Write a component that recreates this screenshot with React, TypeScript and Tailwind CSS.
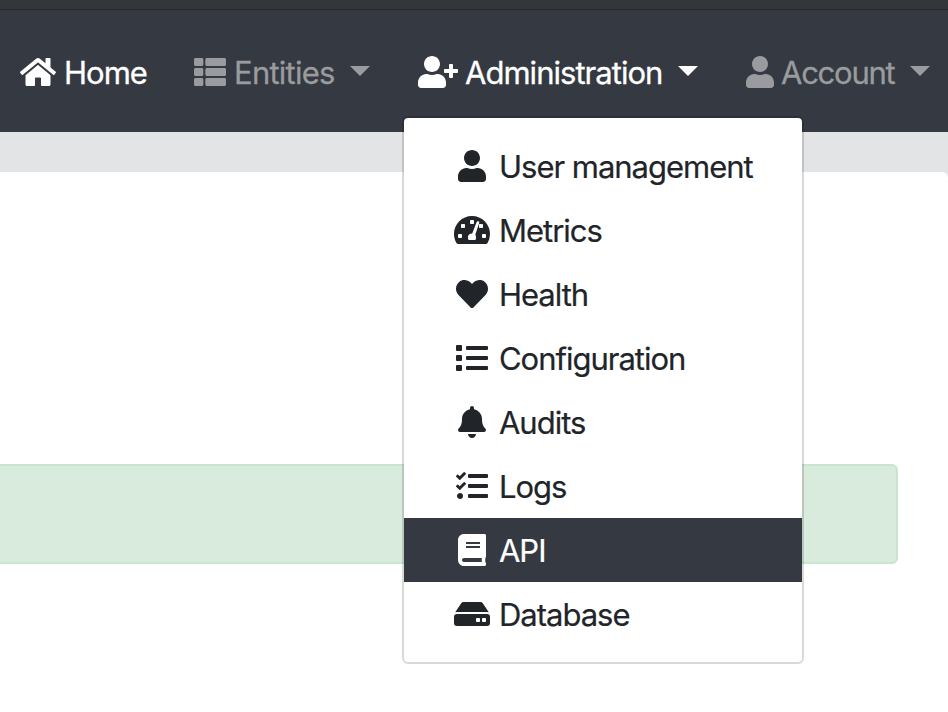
import type { ComponentType, ReactNode } from "react";
import { FaBell, FaBook, FaHeart, FaList, FaTasks, FaThList, FaUser, FaUserPlus } from "react-icons/fa";

function HomeIcon() {
  return (
    <svg viewBox="0 0 576 512" fill="currentColor" className="h-8 w-9 shrink-0">
      <path d="M488 312.7V456c0 13.3-10.7 24-24 24H348c-6.6 0-12-5.4-12-12V356c0-6.6-5.4-12-12-12h-72c-6.6 0-12 5.4-12 12v112c0 6.6-5.4 12-12 12H112c-13.3 0-24-10.7-24-24V312.7c0-3.6 1.6-7 4.4-9.3l188-154.8c4.4-3.6 10.8-3.6 15.3 0l188 154.8c2.7 2.3 4.3 5.7 4.3 9.3zm83.6-60.9L488 182.9V44.4c0-6.6-5.4-12-12-12h-56c-6.6 0-12 5.4-12 12V117l-89.5-73.7c-17.7-14.6-43.3-14.6-61 0L4.4 251.8c-5.1 4.2-5.8 11.8-1.6 16.9l25.5 31c4.2 5.1 11.8 5.8 16.9 1.6l235.2-193.7c4.4-3.6 10.8-3.6 15.3 0l235.2 193.7c5.1 4.2 12.7 3.5 16.9-1.6l25.5-31c4.2-5.2 3.4-12.7-1.7-16.9z" />
    </svg>
  );
}

function GaugeIcon({ className }: { className?: string }) {
  return (
    <svg viewBox="0 0 36 32" fill="currentColor" className={className}>
      <path d="M18 2C8.06 2 0 10.06 0 20c0 3.3.9 6.4 2.44 9.05.35.6 1.02.95 1.72.95h27.68c.7 0 1.37-.35 1.72-.95A17.9 17.9 0 0 0 36 20C36 10.06 27.94 2 18 2z" />
      <g fill="white">
        <rect x="4" y="20" width="4" height="4" rx="0.7" />
        <rect x="28" y="20" width="4" height="4" rx="0.7" />
        <rect x="7" y="10" width="4" height="4" rx="0.7" />
        <rect x="25" y="10" width="4" height="4" rx="0.7" />
        <rect x="16" y="6" width="4" height="4" rx="0.7" />
        <path d="M22.6 8.2c.3-.8 1-1.1 1.7-.9.8.2 1.1 1 .9 1.7L21.3 20.8c.5.7.8 1.5.8 2.4 0 1-.2 1.9-.7 2.8h-6.8c-.5-.9-.7-1.8-.7-2.8 0-2.1 1.7-3.5 4.3-3.6z" />
      </g>
    </svg>
  );
}

function DriveIcon({ className }: { className?: string }) {
  return (
    <svg viewBox="0 0 36 32" fill="currentColor" className={className}>
      <path d="M36 19v6a3 3 0 0 1-3 3H3a3 3 0 0 1-3-3v-6a3 3 0 0 1 3-3h30a3 3 0 0 1 3 3zM33 14c.6 0 1.2.1 1.8.3L28.8 5.3A3 3 0 0 0 26.4 4H9.6a3 3 0 0 0-2.4 1.3l-6 9c.6-.2 1.2-.3 1.8-.3z" />
      <rect x="22" y="20" width="4" height="4" rx="0.7" fill="white" />
      <rect x="28" y="20" width="4" height="4" rx="0.7" fill="white" />
    </svg>
  );
}

function Caret() {
  return (
    <span className="mb-0.5 h-0 w-0 shrink-0 border-x-[10px] border-t-[10px] border-x-transparent border-t-current" />
  );
}

function NavItem({ className, children }: { className: string; children: ReactNode }) {
  return <a className={`flex h-10 shrink-0 items-center ${className}`}>{children}</a>;
}

const entries: {
  label: string;
  Icon: ComponentType<{ className?: string }>;
  size: string;
  active?: boolean;
}[] = [
  { label: "User management", Icon: FaUser, size: "w-7" },
  { label: "Metrics", Icon: GaugeIcon, size: "w-9" },
  { label: "Health", Icon: FaHeart, size: "w-8" },
  { label: "Configuration", Icon: FaList, size: "w-8" },
  { label: "Audits", Icon: FaBell, size: "w-7" },
  { label: "Logs", Icon: FaTasks, size: "w-8" },
  { label: "API", Icon: FaBook, size: "w-7", active: true },
  { label: "Database", Icon: DriveIcon, size: "w-9" },
];

function AdminMenu() {
  return (
    <div className="absolute left-[402px] top-[116px] w-[402px] rounded-[6px] border-2 border-black/15 bg-white bg-clip-padding py-4 tracking-[-1.02px] text-[#212529]">
      {entries.map(({ label, Icon, size, active }) => (
        <a
          key={label}
          className={`flex h-16 items-center pl-12 ${active ? "bg-[#353941] text-white" : ""}`}
        >
          <span className="flex w-10 shrink-0 justify-center">
            <Icon className={`h-8 ${size}`} />
          </span>
          <span className="ml-[7px] whitespace-nowrap pt-0.5 leading-10 [-webkit-text-stroke:0.2px]">{label}</span>
        </a>
      ))}
    </div>
  );
}

export default function App() {
  return (
    <div className="relative flex h-[712px] w-[948px] flex-col overflow-hidden bg-[#e3e4e6] font-['Inter','Liberation_Sans',sans-serif] text-[31px]">
      <div className="h-[10px] shrink-0 border-b border-[#232729] bg-[#333739]" />
      <nav className="flex h-[122px] shrink-0 items-center bg-[#353941] pt-0.5 text-[#9a9b9e]">
        <NavItem className="ml-5 w-[173px] text-white">
          <HomeIcon />
          <span className="ml-2 pt-0.5 tracking-[-1px] [-webkit-text-stroke:0.3px]">Home</span>
        </NavItem>
        <NavItem className="w-[225px]">
          <FaThList className="ml-px h-8 w-8 shrink-0" />
          <span className="ml-2 w-[116px] pt-0.5 tracking-[-0.75px] [-webkit-text-stroke:0.3px]">Entities</span>
          <Caret />
        </NavItem>
        <NavItem className="w-[328px] text-white">
          <FaUserPlus className="h-8 w-10 shrink-0" />
          <span className="ml-[7px] w-[213px] pt-0.5 tracking-[-0.97px] [-webkit-text-stroke:0.3px]">Administration</span>
          <Caret />
        </NavItem>
        <NavItem className="">
          <FaUser className="h-8 w-7 shrink-0" />
          <span className="ml-[7px] w-[129px] pt-0.5 tracking-[-1.25px] [-webkit-text-stroke:0.3px]">Account</span>
          <Caret />
        </NavItem>
      </nav>
      <main className="mt-10 flex-1 rounded-tr-[6px] bg-white pt-[292px]">
        <div className="h-[100px] w-[898px] rounded-r-[6px] border-2 border-l-0 border-[#c9e5cd] bg-[#d9ebdc]" />
      </main>
      <AdminMenu />
    </div>
  );
}
